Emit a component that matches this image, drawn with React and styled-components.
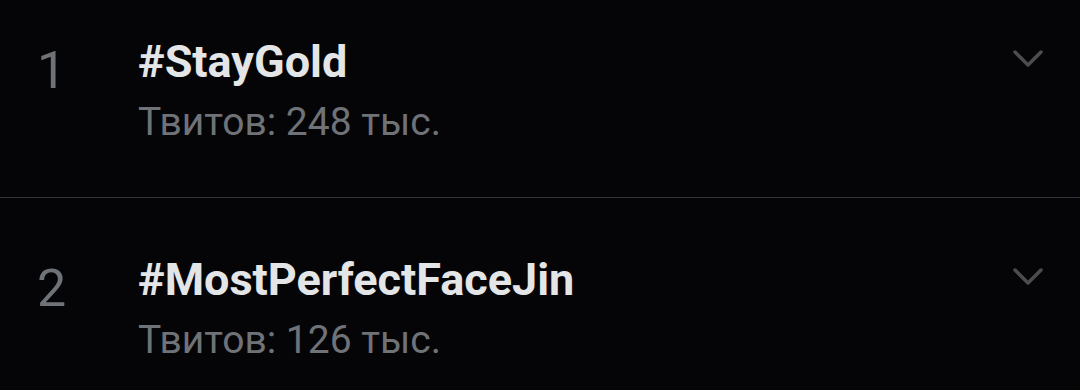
import React from "react";
import styled, { createGlobalStyle } from "styled-components";

const Global = createGlobalStyle`
  html, body { margin: 0; padding: 0; background: #050507; }
  body { font-family: Roboto, "Noto Sans", sans-serif; }
`;

const List = styled.div`
  width: 1080px;
  height: 390px;
  background: #050507;
  overflow: hidden;
`;

const Row = styled.div`
  display: flex;
  align-items: flex-start;
  padding: ${p => p.$top}px 36px 0 37px;
  height: ${p => p.$h}px;
  box-sizing: border-box;
  border-bottom: ${p => (p.$divider ? "1px solid #333538" : "none")};
`;

const Rank = styled.div`
  width: 101px;
  flex: none;
  font-size: 52px;
  line-height: 1;
  color: #6f7377;
  margin-top: 9px;
`;

const Content = styled.div`
  flex: 1;
  display: flex;
  flex-direction: column;
`;

const Title = styled.div`
  font-size: 45px;
  font-weight: 700;
  line-height: 52px;
  color: #e4e5e7;
`;

const Sub = styled.div`
  font-size: 39px;
  font-weight: 400;
  line-height: 46px;
  color: #6f7377;
  margin-top: 11px;
`;

const Chevron = styled.svg`
  width: 32px;
  height: 21px;
  flex: none;
  margin-top: 13px;
  margin-right: 0;
`;

const items = [
  { n: 1, tag: "#StayGold", count: "Твитов: 248 тыс." },
  { n: 2, tag: "#MostPerfectFaceJin", count: "Твитов: 126 тыс." },
];

export default function App() {
  return (
    <List>
      <Global />
      {items.map((it, i) => (
        <Row key={it.n} $top={i === 0 ? 36 : 56} $h={i === 0 ? 198 : 192} $divider={i === 0}>
          <Rank>{it.n}</Rank>
          <Content>
            <Title>{it.tag}</Title>
            <Sub>{it.count}</Sub>
          </Content>
          <Chevron viewBox="0 0 32 21">
            <path d="M3 3 L16 16 L29 3" fill="none" stroke="#4a4c50" strokeWidth="3.5" strokeLinecap="round" strokeLinejoin="round" />
          </Chevron>
        </Row>
      ))}
    </List>
  );
}
